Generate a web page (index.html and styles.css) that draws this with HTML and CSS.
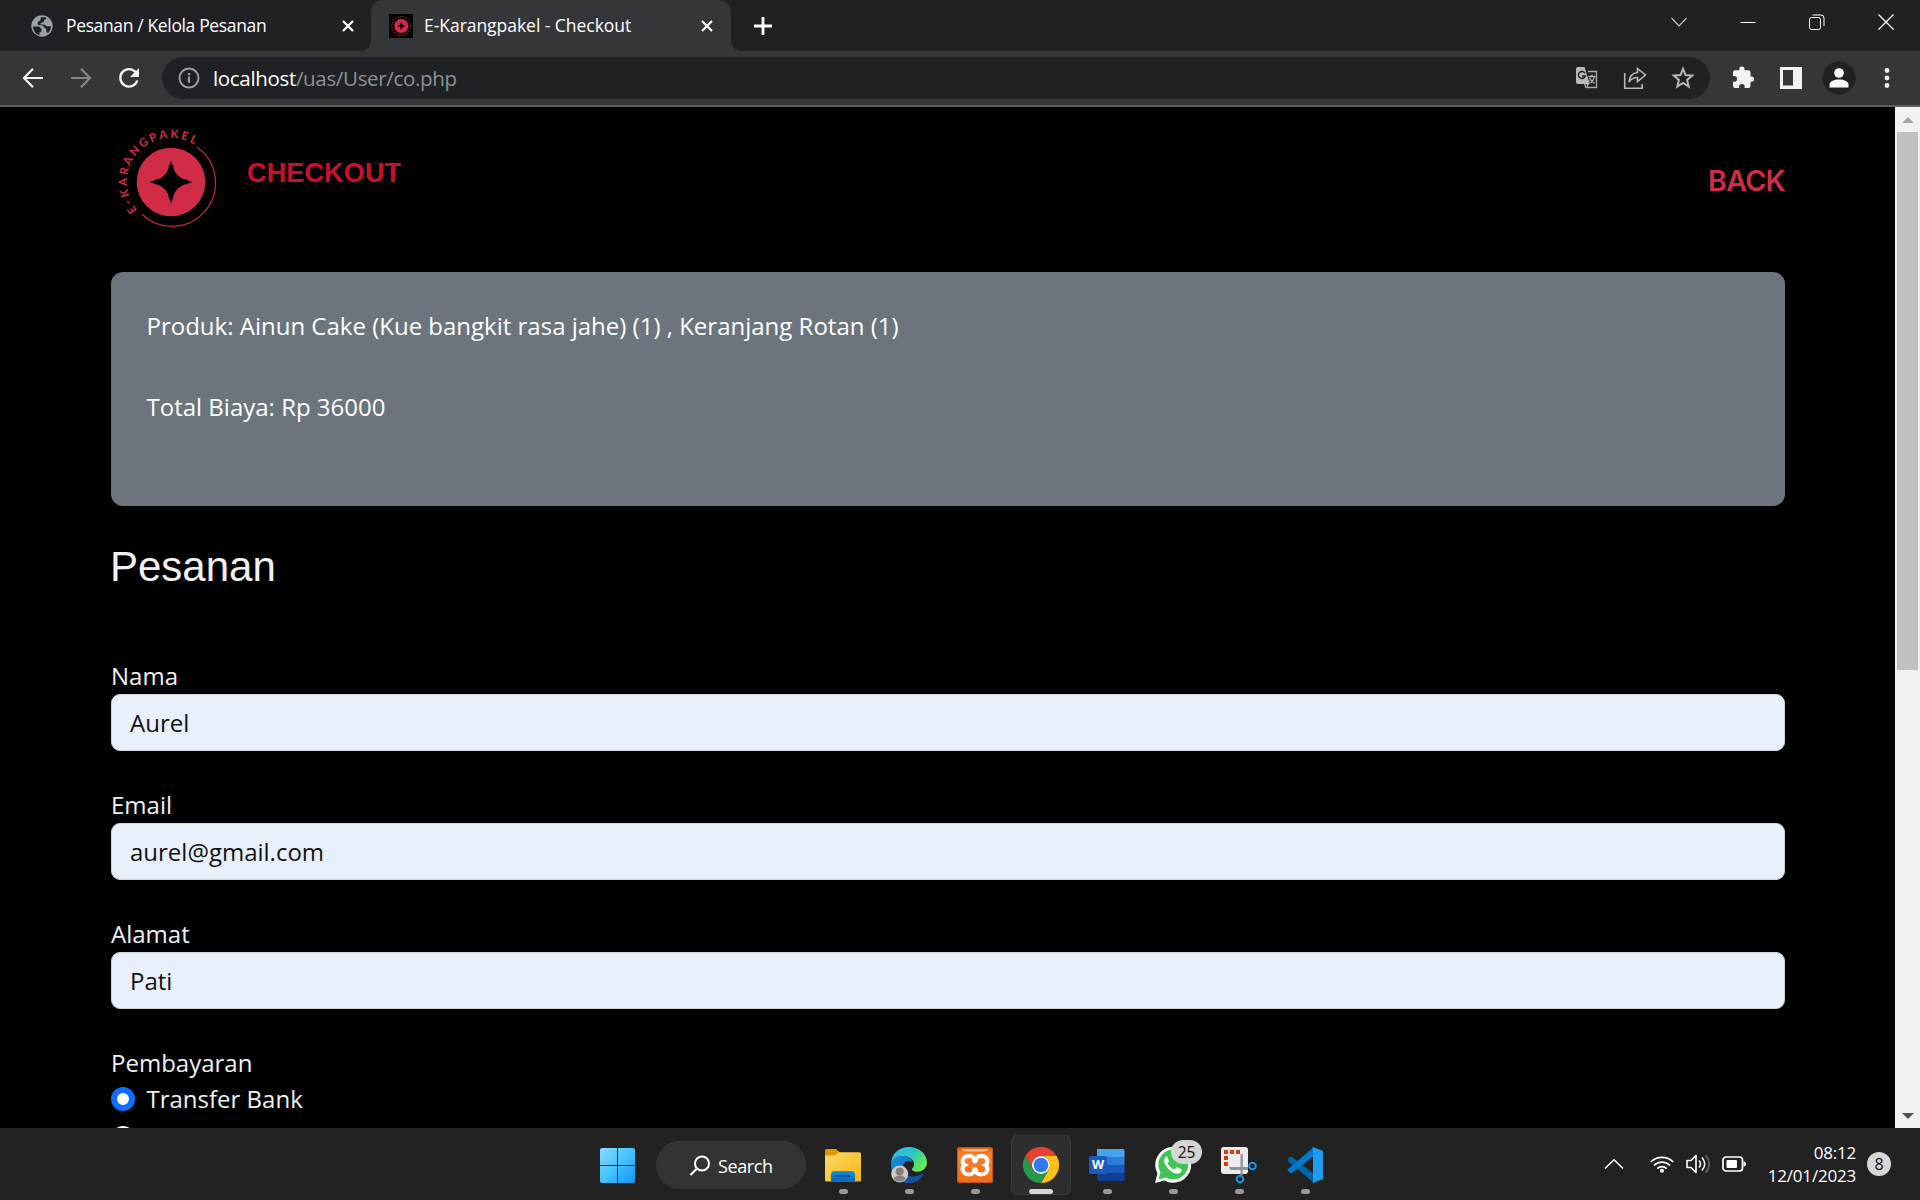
FILE: index.html
```html
<!DOCTYPE html>
<html lang="id">
<head>
<meta charset="utf-8">
<title>E-Karangpakel - Checkout</title>
<link rel="stylesheet" href="styles.css">
</head>
<body>
<div class="screen">
  <header class="tabstrip">
    <div class="tab">
      <svg class="tab-icon" viewBox="0 0 24 24"><circle cx="12" cy="12" r="10.700" fill="#9aa0a6"/><path d="M3.200 12.600h5.600l2.700 2.200v2.600l-2 1v2.800C5.400 20.200 3 16.600 3.200 12.600zM11 3.200h5.200c.3 1.400-.5 2.300-1.700 2.600l-1.200 2.400-2.700.7v1.600l4.300.3 2 1.600 3.900-.5c.3 3-1 5.600-3 7.300l-1.600-1.600v-2.600l-2.400-1.900-1.600-1.900-4.200-.2-.4-2.800 2.700-1.700z" fill="#202124"/></svg>
      <span class="tab-title t1">Pesanan / Kelola Pesanan</span>
      <svg class="tab-close" viewBox="0 0 12 12"><path d="M1 1l10 10M11 1L1 11" stroke="#fff" stroke-width="2.200"/></svg>
    </div>
    <div class="tab active">
      <svg class="tab-icon" viewBox="0 0 24 24"><path fill="#000" d="M0 0h24v24H0z"/><circle cx="12.300" cy="12" r="7" fill="#d02c48"/><circle cx="12.300" cy="12" r="9.500" fill="none" stroke="#8b2034" stroke-width="1.200" stroke-dasharray="1.500 1.200"/><path d="M12.300 8l1.200 2.800 2.800 1.200-2.800 1.200-1.200 2.800-1.200-2.800L8.300 12l2.800-1.200z" fill="#000"/></svg>
      <span class="tab-title t2">E-Karangpakel - Checkout</span>
      <svg class="tab-close" viewBox="0 0 12 12"><path d="M1 1l10 10M11 1L1 11" stroke="#fff" stroke-width="2.200"/></svg>
    </div>
    <svg class="new-tab" viewBox="0 0 18 18"><path d="M9 0v18M0 9h18" stroke="#fff" stroke-width="2.800"/></svg>
    <div class="window-buttons">
      <svg viewBox="0 0 16 16"><path d="M.5 4L8 12l7.500-8" fill="none" stroke="#ccc" stroke-width="1.100"/></svg>
      <svg viewBox="0 0 16 16"><path d="M.5 8.500h15" stroke="#fff"/></svg>
      <svg viewBox="0 0 16 16"><rect x=".5" y="3.500" width="11" height="12" rx="2" fill="none" stroke="#fff"/><path d="M3.500 1h8.500a3 3 0 0 1 3 3v8" fill="none" stroke="#fff"/></svg>
      <svg viewBox="0 0 16 16"><path d="M.5.5l15 15M15.500.5l-15 15" stroke="#fff" stroke-width="1.300"/></svg>
    </div>
  </header>

  <nav class="toolbar">
    <svg viewBox="0 0 24 24"><path d="M22 12H3.500M12 2.800L3 12l9 9.200" fill="none" stroke="#f1f3f4" stroke-width="2.200"/></svg>
    <svg viewBox="0 0 24 24"><path d="M2 12h18.500M12 2.800l9 9.200-9 9.200" fill="none" stroke="#85868a" stroke-width="2.200"/></svg>
    <svg viewBox="0 0 24 24"><path d="M20.300 14.500A8.700 8.700 0 1 1 18.700 6.300" fill="none" stroke="#f1f3f4" stroke-width="2.400"/><path d="M22 2v9h-9z" fill="#f1f3f4"/></svg>
    <div class="omnibox">
      <svg viewBox="0 0 24 24"><circle cx="12" cy="12" r="9.500" fill="none" stroke="#9aa0a6" stroke-width="1.900"/><path d="M12 10.700v6M12 7v2.200" stroke="#9aa0a6" stroke-width="2.200"/></svg>
      <span class="url"><b>localhost</b>/uas/User/co.php</span>
      <div class="omni-actions">
        <svg viewBox="0 0 24 24"><path d="M13 5.500h8.500v16H11l-1.500-4" fill="none" stroke="#a6a7a9" stroke-width="1.400"/><path d="M3 1h6.500l5.200 17H3a2 2 0 0 1-2-2V3a2 2 0 0 1 2-2z" fill="#b8b9bb"/><path d="M10.700 14.500h4L12.500 22z" fill="#b8b9bb"/><path d="M10 7.200A3.500 3.500 0 1 0 10.300 10H7" fill="none" stroke="#202124" stroke-width="1.500"/><path d="M13.500 10.500h7M17 8.800v1.700M14.500 12c1 2.500 2.800 4 5 5.300M19.300 11c-.5 2.800-2 4.700-4 6" fill="none" stroke="#b8b9bb" stroke-width="1.300"/></svg>
        <svg viewBox="0 0 24 24"><path d="M1.700 7v15.300h17.500V18" fill="none" stroke="#b8b9bb" stroke-width="1.600"/><path d="M14.500 2.500L22.500 9l-8 6.500v-4c-4 0-6.500 1.500-8.500 4.500.5-5 3.500-9 8.500-9.500z" fill="none" stroke="#b8b9bb" stroke-width="1.600"/></svg>
        <svg viewBox="0 0 24 24"><path d="M12 2.900l2.500 6.200 6.700.5-5.100 4.300 1.600 6.600-5.700-3.600-5.700 3.600 1.600-6.600-5.100-4.300 6.700-.5z" fill="none" stroke="#b8b9bb" stroke-width="2"/></svg>
      </div>
    </div>
    <svg viewBox="0 0 24 24"><path d="M20.500 10.500h-1V6.200a2 2 0 0 0-2-2h-4V3a2.600 2.600 0 0 0-5.200 0v1.200H4a2 2 0 0 0-2 2v3.900h1.200a2.800 2.800 0 0 1 0 5.600H2v4.300a2 2 0 0 0 2 2h4.100v-1.200a2.800 2.800 0 0 1 5.600 0V22h3.800a2 2 0 0 0 2-2v-4.300h1a2.600 2.600 0 0 0 0-5.200z" fill="#f1f3f4"/></svg>
    <svg viewBox="0 0 24 24"><path d="M1 1h22v22H1zm3 3v15.500h10V4z" fill="#f1f3f4" fill-rule="evenodd"/></svg>
    <svg class="profile" viewBox="0 0 34 34"><circle cx="17" cy="17" r="16.500" fill="#202124"/><circle cx="17" cy="12" r="4.800" fill="#fff"/><path d="M7.500 26.500v-3c0-3 4.500-5 9.500-5s9.500 2 9.500 5v3z" fill="#fff"/></svg>
    <svg viewBox="0 0 24 24" fill="#f1f3f4"><circle cx="12" cy="4.500" r="2.400"/><circle cx="12" cy="12" r="2.400"/><circle cx="12" cy="19.500" r="2.400"/></svg>
  </nav>

  <div class="viewport">
    <main class="page">
      <div class="brandbar">
        <svg class="logo" viewBox="0 0 112 112">
          <circle cx="56" cy="56" r="34.300" fill="#d02c48"/>
          <path d="M56 34Q58.500 53.500 78 56 58.500 58.500 56 78 53.500 58.500 34 56 53.500 53.500 56 34z" fill="#000"/>
          <path d="M56 39C57 50 62 55 73 56 62 57 57 62 56 73 55 62 50 57 39 56 50 55 55 50 56 39z" fill="#000" stroke="#000" stroke-width="4"/>
          <path d="M82 21.200A43.500 43.500 0 1 1 27 88.300" fill="none" stroke="#b9283f" stroke-width="1.300"/>
          <path id="ring" d="M22.100 84A44 44 0 0 1 80.500 19.400" fill="none"/>
          <text class="ring-text"><textPath href="#ring" textLength="124">E-KARANGPAKEL</textPath></text>
        </svg>
        <h1 class="title">CHECKOUT</h1>
        <a class="back">BACK</a>
      </div>
      <section class="summary">
        <p class="s1">Produk: Ainun Cake (Kue bangkit rasa jahe) (1) , Keranjang Rotan (1)</p>
        <p class="s2">Total Biaya: Rp 36000</p>
      </section>
      <h2 class="heading">Pesanan</h2>
      <form class="form">
        <div class="field"><label>Nama</label><div class="input">Aurel</div></div>
        <div class="field"><label>Email</label><div class="input">aurel@gmail.com</div></div>
        <div class="field"><label>Alamat</label><div class="input">Pati</div></div>
        <div class="field">
          <label>Pembayaran</label>
          <div class="option"><span class="radio checked"></span><span>Transfer Bank</span></div>
          <div class="option"><span class="radio"></span></div>
        </div>
      </form>
    </main>
    <div class="scrollbar">
      <svg class="up" viewBox="0 0 12 6"><path d="M0 6l6-6 6 6z" fill="#a3a3a3"/></svg>
      <div class="thumb"></div>
      <svg class="down" viewBox="0 0 12 6"><path d="M0 0l6 6 6-6z" fill="#505050"/></svg>
    </div>
  </div>

  <footer class="taskbar">
    <svg class="start" viewBox="0 0 36 36"><defs><linearGradient id="win" gradientUnits="userSpaceOnUse" x1="0" y1="0" x2="35" y2="35"><stop offset="0" stop-color="#8bdcff"/><stop offset=".5" stop-color="#45c3fb"/><stop offset="1" stop-color="#0a94f6"/></linearGradient></defs><path d="M2 0h15v17H0V2q0-2 2-2zM18 0h15q2 0 2 2v15H18zM0 18h17v17H2q-2 0-2-2zM18 18h17v15q0 2-2 2H18z" fill="url(#win)"/></svg>
    <div class="search">
      <svg viewBox="0 0 22 22"><circle cx="13" cy="8.500" r="7" fill="none" stroke="#fff" stroke-width="2"/><path d="M8 13.500L1.500 20" stroke="#fff" stroke-width="2.200"/></svg>
      <span>Search</span>
    </div>
    <div class="apps">
      <div class="app">
        <svg viewBox="0 0 36 36"><defs><linearGradient id="fold" x1="0" y1="0" x2="1" y2="1"><stop offset="0" stop-color="#ffd96b"/><stop offset="1" stop-color="#f5b70e"/></linearGradient><linearGradient id="fb" x1="0" y1="0" x2="0" y2="1"><stop offset="0" stop-color="#1391de"/><stop offset="1" stop-color="#0665ba"/></linearGradient></defs><path d="M0 3.500Q0 2 1.500 2H11l4.500 4v5H0z" fill="#de9800"/><path d="M0 8.500h10l4-3.300h20.500q1.500 0 1.500 1.500v26.600q0 1.200-1.500 1.200h-33Q0 34.500 0 33z" fill="url(#fold)"/><path d="M6 34.500V28q0-4 4-4h16q4 0 4 4v6.500z" fill="url(#fb)"/><path d="M11 29h14" stroke="#064a89" stroke-width="1.500" stroke-linecap="round"/></svg>
      </div>
      <div class="app">
        <svg viewBox="0 0 36 36"><defs><linearGradient id="eg" x1="0" y1="0" x2="1" y2=".6"><stop offset="0" stop-color="#35b7ef"/><stop offset=".55" stop-color="#2bc5c9"/><stop offset="1" stop-color="#6be94a"/></linearGradient><linearGradient id="eb" x1="0" y1="0" x2="1" y2="1"><stop offset="0" stop-color="#1696e4"/><stop offset="1" stop-color="#0c4a9c"/></linearGradient></defs><path d="M0 17C0 7 8 0 18 0s18 7 18 15.500c0 5-4 9.200-9 9.200-4.500 0-6.500-1.700-6-3 1-1.200 2-2.300 2-4.500C23 12 17 9 11 9 5 9 1 13 0 17z" fill="url(#eg)"/><path d="M0 18C1 12.500 5.500 9 11 9c6 0 9.500 3.500 10.500 6-6-3-11.500 1.500-9 9 2 6 9 10 17 6.500C26.500 34 22.500 36 18 36 8 36 0 28 0 18z" fill="url(#eb)"/><path d="M13 18c-2 9 7 15 18 9q3-1 1 2C28 34 23 36 18 36c-6-2-11-9-5-18z" fill="#124f9f"/><circle cx="8.700" cy="27" r="8.500" fill="#cfcbc8"/><circle cx="8.700" cy="24.500" r="4" fill="#83807e"/><path d="M2.700 32q1-3.500 6-3.500t6 3.500q-6 5-12 0z" fill="#83807e"/></svg>
      </div>
      <div class="app">
        <svg viewBox="0 0 36 36"><defs><linearGradient id="xp" x1="0" y1="0" x2="0" y2="1"><stop offset="0" stop-color="#d95811"/><stop offset=".2" stop-color="#ff8128"/><stop offset="1" stop-color="#ef6c16"/></linearGradient></defs><rect width="36" height="36" rx="3" fill="url(#xp)"/><rect x=".5" y=".5" width="35" height="35" rx="3" fill="none" stroke="#c4571a"/><path d="M4 2h28q-2 2.500-6 2.500H10Q6 4.500 4 2z" fill="#ffb789"/><path d="M12 9c7 0 4 5.500 6 5.500S17 9 24 9s8 7 4.300 9c3.700 2 2.700 9.500-4.300 9.500s-4-5.500-6-5.500 1 5.500-6 5.500S4 20 7.700 18C4 16 5 9 12 9z" fill="none" stroke="#fff" stroke-width="4"/></svg>
      </div>
      <div class="app current">
        <svg viewBox="0 0 36 36"><path d="M2.400 9A18 18 0 0 1 33.600 9H18a9 9 0 0 0-7.800 13.500z" fill="#e84133"/><path d="M33.600 9A18 18 0 0 1 18 36l7.800-13.500A9 9 0 0 0 18 9z" fill="#fdc113"/><path d="M2.400 9A18 18 0 0 0 18 36l7.800-13.500a9 9 0 0 1-15.600 0z" fill="#279847"/><circle cx="18" cy="18" r="9" fill="#fff"/><circle cx="18" cy="18" r="7.300" fill="#3279eb"/></svg>
      </div>
      <div class="app">
        <svg viewBox="0 0 36 36"><path d="M8 2h26q1.500 0 1.500 1.500V10H8z" fill="#41a5ee"/><path d="M8 10h27.500v8H8z" fill="#2b7cd3"/><path d="M8 18h27.500v8H8z" fill="#185abd"/><path d="M8 26h27.500v6.500q0 1.500-1.500 1.500H9.500Q8 34 8 32.500z" fill="#103f91"/><rect y="9" width="18" height="18" rx="1.500" fill="#1b5bbd"/><text class="word-w" x="9" y="22.300">W</text></svg>
      </div>
      <div class="app">
        <svg viewBox="0 0 36 36"><path d="M0 36l2.500-9.500A18 18 0 1 1 9.500 33.500z" fill="#fff"/><path d="M3.500 32.500l2-7.200A15 15 0 1 1 10.800 30.500z" fill="#3fc351"/><path d="M12 9.300c-3 1.400-3.600 4.500-1.800 7.900 2.800 5 6.300 8.300 11.300 9.400 3 .5 5.500-1.500 5-4.300l-4.500-2.300-2.500 2.500c-3-1-5.500-3.500-7-6.200l1.700-2z" fill="#fff"/></svg>
        <span class="badge">25</span>
      </div>
      <div class="app">
        <svg viewBox="0 0 36 36"><rect width="27" height="27" rx="3" fill="#ebecee"/><path d="M3 3h4v4H3zM9 3h4v4H9zM15 3h4v4h-4zM3 9h4v4H3zM3 15h4v4H3z" fill="#d83b0b"/><path d="M19.500 7h2.300v21h-2.300zM8 20h19v3H11q-3 0-3-3z" fill="#8c949c"/><circle cx="31.500" cy="19" r="3.300" fill="none" stroke="#1795df" stroke-width="2"/><circle cx="19" cy="32" r="3.300" fill="none" stroke="#1795df" stroke-width="2"/></svg>
      </div>
      <div class="app">
        <svg viewBox="0 0 36 36"><path d="M1 12l2-2q1-.6 2 0l22 17v9L1 14q-1-1 0-2z" fill="#0065a9"/><path d="M1 24l2 2q1 .6 2 0L27 9V0L1 22q-1 1 0 2z" fill="#007acc"/><path d="M26 0l10 4v28l-10 4q-1-.5 0-2V2q-1-1.500 0-2z" fill="#1f9cf0"/></svg>
      </div>
    </div>
    <div class="tray">
      <svg class="chev" viewBox="0 0 18 10"><path d="M0 9.500L9 .8l9 8.700" fill="none" stroke="#fff" stroke-width="1.400"/></svg>
      <svg class="wifi" viewBox="0 0 24 18"><path d="M.7 7A16 16 0 0 1 23.300 7M4 10.500a11.300 11.300 0 0 1 16 0M7.300 13.600a6.700 6.700 0 0 1 9.400 0" fill="none" stroke="#fff" stroke-width="1.700"/><circle cx="12" cy="15.700" r="2" fill="#fff"/></svg>
      <svg class="vol" viewBox="0 0 25 20"><path d="M1 6.500h4l5-5v17l-5-5H1z" fill="none" stroke="#fff" stroke-width="1.600" stroke-linejoin="round"/><path d="M13 6.500q3 3.500 0 7M16 3.500q5.500 6.500 0 13" fill="none" stroke="#fff" stroke-width="1.500"/><path d="M19.500 1q7.500 9 0 18" fill="none" stroke="#666" stroke-width="1.500"/></svg>
      <svg class="bat" viewBox="0 0 24 16"><rect x="1" y="1" width="19.500" height="14" rx="3" fill="none" stroke="#fff" stroke-width="1.700"/><rect x="4.500" y="4" width="10.500" height="8" rx="1" fill="#fff"/><path d="M21.500 5.500q2.500 0 2.500 2.500t-2.500 2.500z" fill="#fff"/></svg>
      <div class="clock"><span class="time">08:12</span><span class="date">12/01/2023</span></div>
      <span class="notif">8</span>
    </div>
  </footer>
</div>
</body>
</html>
```
FILE: styles.css
```css
* { box-sizing: border-box; }
body { margin: 0; background: #000; font-family: "Open Sans", sans-serif; color: #fff; }
svg { display: block; flex: none; overflow: visible; }
.screen { width: 1920px; height: 1200px; display: flex; flex-direction: column; overflow: hidden; }

/* Browser tabs */
.tabstrip { height: 51px; background: #202124; display: flex; align-items: center; flex: none; }
.tab { width: 371px; height: 51px; padding: 0 17px 0 30px; display: flex; align-items: center; }
.tab.active { position: relative; width: 360px; padding: 0 18px; background: #35363a; border-radius: 12px 12px 0 0; }
.tab.active::before, .tab.active::after { content: ""; position: absolute; bottom: 0; width: 10px; height: 10px; }
.tab.active::before { left: -10px; background: radial-gradient(circle at 0 0, transparent 9.500px, #35363a 10px); }
.tab.active::after { right: -10px; background: radial-gradient(circle at 100% 0, transparent 9.500px, #35363a 10px); }
.tab-icon { width: 24px; height: 24px; margin-right: 12px; }
.tab-title { flex: 1; font-size: 17.500px; white-space: nowrap; padding-bottom: 1px; }
.t1 { letter-spacing: -.36px; }
.t2 { letter-spacing: -.04px; margin-left: -1px; }
.tab-close { width: 12px; height: 12px; }
.new-tab { width: 18px; height: 18px; margin-left: 23px; }
.window-buttons { margin-left: auto; display: flex; gap: 53px; padding: 0 26px 8px 0; }
.window-buttons svg { width: 16px; height: 16px; }

/* Navigation toolbar */
.toolbar { height: 56px; flex: none; display: flex; align-items: center; gap: 24px; padding: 0 21px; background: #35363a; border-bottom: 2px solid #5f6063; }
.toolbar svg { width: 24px; height: 24px; }
.toolbar .profile { width: 34px; height: 34px; margin: 0 -5px; }
.omnibox { flex: 1; height: 42px; margin: 0 -3px; padding: 0 15px; border-radius: 21px; background: #202124; display: flex; align-items: center; }
.url { margin-left: 12px; font-size: 20.500px; letter-spacing: -.33px; color: #8d9195; }
.url b { font-weight: 400; color: #fff; }
.omni-actions { margin-left: auto; display: flex; gap: 24px; }

/* Page content */
.viewport { height: 1021px; flex: none; display: flex; overflow: hidden; }
.page { flex: 1; padding: 0 110px 0 111px; font-size: 24px; line-height: 36px; color: #f1f1f1; }
.brandbar { height: 165px; display: flex; align-items: flex-start; }
.logo { width: 112px; height: 112px; margin: 19px 0 0 4px; }
.ring-text { font: 700 11.500px Lato, sans-serif; fill: #d02c48; }
.title { margin: 48px 0 0 20px; font: 700 27px/36px "Liberation Sans", Arial, sans-serif; letter-spacing: .15px; color: #c8102e; }
.back { margin: 56px 0 0 auto; font: 600 28.500px/36px Inter, sans-serif; letter-spacing: -.6px; color: #d02c48; }
.summary { height: 234px; padding: 36px 35.500px; border-radius: 12px; background: #6c757d; color: #fff; }
.summary p { margin: 0 0 45px; }
.heading { margin: 36px 0 66px -1px; font: 400 42px/50px "Liberation Sans", Arial, sans-serif; }
.form { display: flex; flex-direction: column; gap: 36px; }
.input { height: 57px; padding: 9.500px 18px; border: 1px solid #ced4da; border-radius: 9px; background: #e8f0fe; color: #111; }
.field label { display: block; }
.option { display: flex; align-items: center; gap: 11.500px; height: 36px; margin-bottom: 3px; }
.radio { width: 24px; height: 24px; border-radius: 50%; background: #fff; }
.radio.checked { border: 6px solid #0d6efd; }

.scrollbar { width: 25px; background: #f1f1f1; display: flex; flex-direction: column; align-items: center; }
.scrollbar svg { width: 12px; height: 6px; }
.up { margin: 10px 0 9px; }
.thumb { width: 21px; height: 538px; background: #c1c1c1; }
.down { margin: auto 0 9px; }

/* Taskbar */
.taskbar { height: 72px; flex: none; display: flex; padding: 0 29px 0 600px; background: #222; align-items: flex-start; font-size: 18px; }
.start { width: 36px; height: 36px; margin-top: 20px; }
.search { width: 150px; height: 48px; margin: 13px 0 0 20px; padding-left: 33px; border-radius: 24px; background: #333; border-top: 1px solid #3d3d3d; display: flex; align-items: center; gap: 7px; letter-spacing: -.4px; }
.search svg { width: 22px; height: 22px; }
.apps { display: flex; gap: 6px; margin: 7px 0 0 7px; }
.app { position: relative; width: 60px; height: 60px; padding: 12px; border-radius: 6px; }
.app svg { width: 36px; height: 36px; }
.app::after { content: ""; position: absolute; left: 26px; bottom: 1px; width: 9px; height: 5px; border-radius: 3px; background: #999; }
.app.current { background: #2e2e2e; box-shadow: inset 0 0 0 1px #3a3a3a; }
.app.current::after { left: 18px; width: 24px; background: #d6d6d6; }
.word-w { font: 700 12.500px "Open Sans", sans-serif; fill: #fff; text-anchor: middle; }
.badge { position: absolute; left: 28px; top: 5px; width: 31px; height: 24px; border-radius: 12px; background: #d5d5d5; color: #111; font-size: 15.500px; line-height: 24px; text-align: center; }
.tray { margin-left: auto; height: 72px; display: flex; align-items: center; }
.chev { width: 18px; height: 10px; }
.wifi { width: 24px; height: 18px; margin-left: 27px; }
.vol { width: 25px; height: 20px; margin-left: 12px; }
.bat { width: 24px; height: 16px; margin-left: 11px; }
.clock { width: 110px; margin-right: -1px; display: flex; flex-direction: column; align-items: flex-end; line-height: 23px; font-size: 17px; letter-spacing: -.2px; }
.notif { width: 24px; height: 24px; margin-left: 12px; border-radius: 50%; background: #d6d6d6; color: #111; font-size: 16px; line-height: 24px; text-align: center; }
```
